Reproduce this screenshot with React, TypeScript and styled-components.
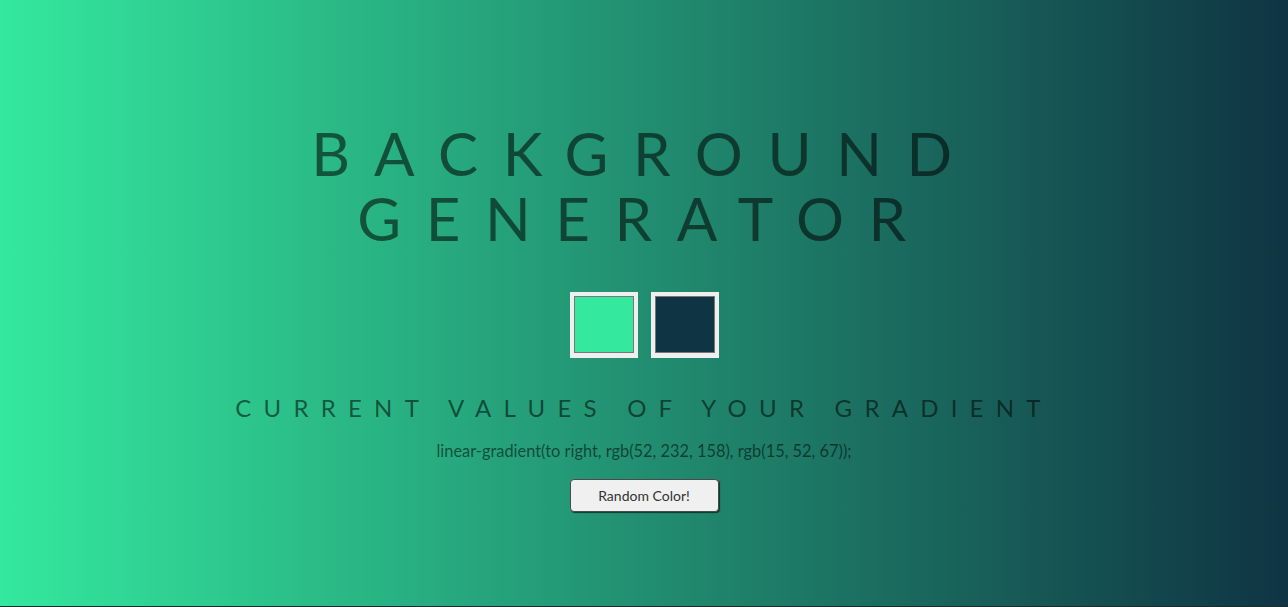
import React from "react";
import styled, { createGlobalStyle } from "styled-components";

const Global = createGlobalStyle`
  html, body { margin: 0; padding: 0; }
  body {
    height: 607px;
    overflow: hidden;
    background: #1b2b2b;
    font-family: Lato, "Open Sans", sans-serif;
  }
`;

const Page = styled.main`
  height: 606px;
  background: linear-gradient(to right, rgb(52, 232, 158), rgb(15, 52, 67));
  display: flex;
  flex-direction: column;
  align-items: center;
  text-align: center;
  color: rgba(0, 0, 0, 0.55);
  padding-top: 121px;
  box-sizing: border-box;
`;

const Title = styled.h1`
  margin: 0;
  font-family: Lato, sans-serif;
  font-weight: 400;
  font-size: 60px;
  line-height: 65px;
  letter-spacing: 0.41em;
`;

const Swatches = styled.div`
  display: flex;
  gap: 13px;
  margin-top: 41px;
`;

const Swatch = styled.div<{ $color: string }>`
  width: 68px;
  height: 66px;
  box-sizing: border-box;
  background: #efefef;
  padding: 4px 4px 5px 4px;
  display: flex;
  & > span {
    flex: 1;
    background: ${(p) => p.$color};
    border: 1px solid #777;
  }
`;

const Subtitle = styled.h3`
  margin: 36px 0 0;
  font-family: Lato, sans-serif;
  font-weight: 400;
  font-size: 24px;
  line-height: 28px;
  letter-spacing: 0.51em;
`;

const Code = styled.p`
  margin: 19px 0 0;
  font-family: Lato, sans-serif;
  font-size: 16.4px;
  line-height: 20px;
  color: rgba(0, 0, 0, 0.55);
`;

const Button = styled.button`
  margin-top: 18px;
  width: 149px;
  height: 33px;
  background: #f0f0f0;
  border: 1px solid #4a4a4a;
  border-radius: 4px;
  box-shadow: 1px 1px 1px rgba(0, 0, 0, 0.6);
  font-family: Lato, sans-serif;
  font-size: 14px;
  color: #333;
  padding: 0;
`;

export default function App() {
  return (
    <>
      <Global />
      <Page>
        <Title>
          BACKGROUND
          <br />
          GENERATOR
        </Title>
        <Swatches>
          <Swatch $color="#34e89e">
            <span />
          </Swatch>
          <Swatch $color="#0f3443">
            <span />
          </Swatch>
        </Swatches>
        <Subtitle>CURRENT VALUES OF YOUR GRADIENT</Subtitle>
        <Code>linear-gradient(to right, rgb(52, 232, 158), rgb(15, 52, 67));</Code>
        <Button>Random Color!</Button>
      </Page>
    </>
  );
}
